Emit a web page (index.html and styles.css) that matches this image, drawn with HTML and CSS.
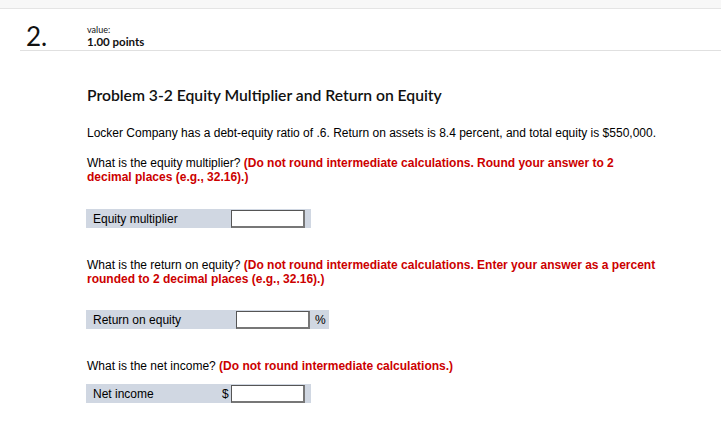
FILE: index.html
```html
<!DOCTYPE html>
<html>
<head>
<meta charset="utf-8">
<link rel="stylesheet" href="styles.css">
</head>
<body>
<div class="topband"></div>
<header class="qhead">
  <div class="qnum">2.</div>
  <div class="qmeta">
    <div class="qval-label">value:</div>
    <div class="qval">1.00 points</div>
  </div>
</header>
<div class="sep"></div>
<main class="content">
  <h1 class="title">Problem 3-2 Equity Multiplier and Return on Equity</h1>
  <p class="intro">Locker Company has a debt-equity ratio of .6. Return on assets is 8.4 percent, and total equity is $550,000.</p>

  <p class="q">What is the equity multiplier? <span class="hint">(Do not round intermediate calculations. Round your answer to 2 decimal places (e.g., 32.16).)</span></p>
  <div class="row row-em">
    <span class="label">Equity multiplier</span>
    <span class="box"></span>
  </div>

  <p class="q q2">What is the return on equity? <span class="hint">(Do not round intermediate calculations. Enter your answer as a percent rounded to 2 decimal places (e.g., 32.16).)</span></p>
  <div class="row row-roe">
    <span class="label">Return on equity</span>
    <span class="box"></span>
    <span class="unit">%</span>
  </div>

  <p class="q q3">What is the net income? <span class="hint">(Do not round intermediate calculations.)</span></p>
  <div class="row row-ni">
    <span class="label">Net income</span>
    <span class="cur">$</span>
    <span class="box"></span>
  </div>
</main>
</body>
</html>
```
FILE: styles.css
```css
html, body {
  margin: 0;
  padding: 0;
  background: #fff;
  color: #000;
}
body {
  font-family: "Liberation Sans", Arial, sans-serif;
  width: 721px;
  height: 429px;
  overflow: hidden;
}
.topband {
  height: 8px;
  background: #f7f7f7;
  border-bottom: 1px solid #e4e4e4;
}
.qhead {
  display: flex;
  align-items: flex-start;
  padding-left: 26px;
  height: 41px;
}
.qnum {
  font-family: "Lato", sans-serif;
  font-size: 26px;
  line-height: 26px;
  margin-top: 14px;
  width: 61px;
  color: #111;
}
.qmeta {
  font-family: "Lato", sans-serif;
  margin-top: 15px;
  color: #111;
}
.qval-label {
  font-size: 9px;
  line-height: 11px;
}
.qval {
  font-size: 11.5px;
  line-height: 13px;
  font-weight: 700;
}
.sep {
  margin-left: 20px;
  height: 1px;
  background: #e0e0e0;
}
.content {
  padding-left: 87px;
  padding-right: 20px;
}
.title {
  font-family: "Lato", sans-serif;
  font-size: 15.7px;
  font-weight: 600;
  line-height: 20px;
  margin: 34px 0 0 0;
  color: #111;
}
.intro {
  font-size: 12px;
  line-height: 14px;
  margin: 21px 0 0 0;
}
.q {
  font-size: 12px;
  line-height: 14px;
  margin: 16px 0 0 0;
  width: 545px;
}
.hint {
  color: #cc0000;
  font-weight: 700;
}
.row {
  display: flex;
  align-items: center;
  background: #d0d7e2;
  height: 19px;
  margin-left: -1px;
  font-size: 12px;
}
.row-em {
  width: 225px;
  margin-top: 25px;
}
.label {
  padding-left: 7px;
}
.box {
  display: block;
  box-sizing: border-box;
  height: 18px;
  background: #fff;
  border-style: solid;
  border-width: 1px 2px 2px 1px;
  border-color: #555 #777 #777 #555;
  width: 74px;
}
.row-em .label { width: 138px; }
.q2 {
  margin-top: 30px;
  width: 580px;
}
.row-roe {
  width: 243px;
  margin-top: 24px;
}
.row-roe .label { width: 143px; }
.unit {
  margin-left: 5px;
}
.q3 {
  margin-top: 30px;
}
.row-ni {
  width: 225px;
  margin-top: 11px;
}
.row-ni .label { width: 129px; }
.cur {
  width: 9px;
}
```
